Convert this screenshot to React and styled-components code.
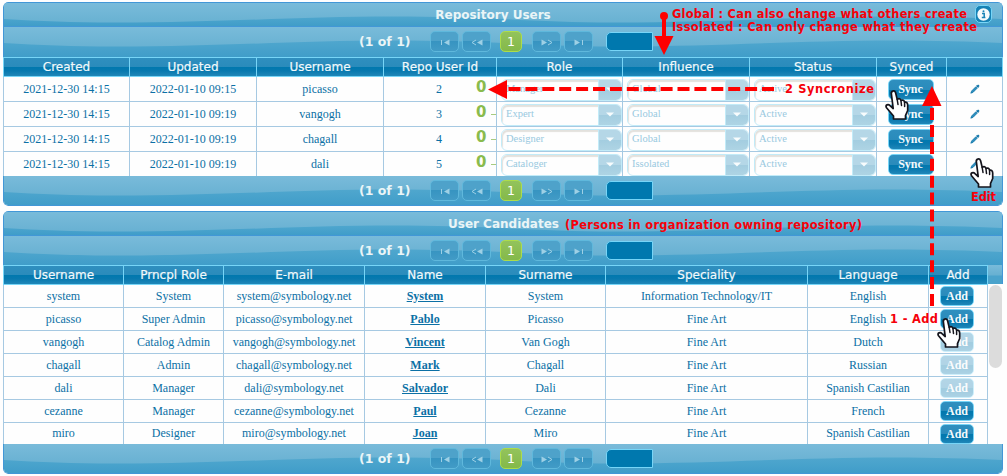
import React from 'react';
import styled, { createGlobalStyle, css } from 'styled-components';

const Global = createGlobalStyle`
  *, *::before, *::after { box-sizing: border-box; }
  body { margin: 0; background: #fefefe; }
`;

const sans = css`font-family: "DejaVu Sans", Verdana, sans-serif;`;
const glass = css`
  background: linear-gradient(#2f8fbf 0, #2a8bbb 50%, #0078ae 50%, #0879af 72%, #2087b8 100%);
`;

const Page = styled.main`
  position: relative;
  width: 1007px;
  height: 476px;
  padding: 2px 4px 0 3px;
  overflow: hidden;
  display: flex;
  flex-direction: column;
  gap: 5px;
  font-family: "Liberation Serif", "Times New Roman", serif;
  font-size: 12px;
  color: #0b70a5;
`;

const Panel = styled.section`
  width: 1000px;
  border-radius: 5px;
  overflow: hidden;
`;

const Bar = styled.div`
  display: grid;
  height: ${(p) => p.$h}px;
  border: 0 solid #4297d7;
  border-width: ${(p) => (p.$foot ? '0 1px 1px' : '1px 1px 0')};
  border-radius: ${(p) => (p.$foot ? '0 0 5px 5px' : p.$title ? '5px 5px 0 0' : '0')};
  overflow: hidden;
  > * { grid-area: 1 / 1; }
`;

const WaveSvg = styled.svg`
  width: 998px;
  height: 100%;
  display: block;
`;

const Title = styled.h2`
  ${sans}
  margin: 0 0 0 ${(p) => p.$shift}px;
  padding-top: 5px;
  font-size: 12px;
  line-height: 15px;
  color: #eaf5f7;
  text-align: center;
  z-index: 1;
`;

const Pager = styled.div`
  ${sans}
  z-index: 1;
  display: flex;
  align-items: flex-start;
  padding: 4px 0 0 355px;
  color: #eaf5f7;
`;

const PageInfo = styled.span`
  width: 71px;
  font-weight: bold;
  font-size: 12.5px;
  line-height: 21px;
  white-space: nowrap;
`;

const PageBtn = styled.span`
  display: flex;
  align-items: center;
  justify-content: center;
  width: 29px;
  height: 21px;
  margin-right: 3px;
  border: 1px solid #5fb8dc;
  border-radius: 5px;
  background: linear-gradient(#4ea2ca 0 50%, #3794c1 50%, #429bc6);
`;

const PageNumber = styled(PageBtn)`
  width: 22px;
  margin: 0 10px 0 6px;
  border-color: #acdd4a;
  background: linear-gradient(#93c35c, #84b94a);
  font-size: 12.5px;
  color: #fff;
`;

const PageSelect = styled.span`
  width: 47px;
  height: 19px;
  margin: 1px 0 0 10px;
  border: 1px solid #77d5f7;
  border-radius: 5px 0 0 5px;
  background: #0078ae;
`;

const Row = styled.div`
  display: grid;
  grid-template-columns: ${(p) => p.$cols};
  height: ${(p) => p.$h}px;
  width: fit-content;
`;

const HeadCell = styled.div`
  ${sans}
  ${glass}
  border: 1px solid #77d5f7;
  border-width: 1px 0 2px 1px;
  font-size: 12px;
  line-height: 18px;
  color: #f2f9fb;
  -webkit-text-stroke: 0.2px #f2f9fb;
  text-align: center;
  white-space: nowrap;
  &:last-child { border-right-width: 1px; }
`;

const Cell = styled.div`
  display: flex;
  align-items: center;
  justify-content: center;
  min-width: 0;
  border: 0 solid #a6c9e2;
  border-left-width: 1px;
  border-bottom-width: ${(p) => (p.$last ? 0 : 1)}px;
  background: #fefefe;
  white-space: nowrap;
  &:last-child { border-right-width: 1px; }
`;

const ActionCell = styled(Cell)`
  padding-right: ${(p) => p.$pad}px;
`;

const EditCell = styled(Cell)`
  padding-left: 1px;
`;

const IdCell = styled(Cell)`
  justify-content: flex-start;
  padding-left: 52px;
`;

const Zero = styled.b`
  ${sans}
  width: 11px;
  margin: -4px 0 0 34px;
  font-size: 15px;
  line-height: 18px;
  color: #8abb4d;
`;

const Dash = styled.i`
  width: 5px;
  height: 1px;
  margin: 0 0 0 4px;
  background: #a7cb81;
`;

const SelectCell = styled(Cell)`
  justify-content: flex-start;
  padding: 1px 0 0 4px;
`;

const SelectBox = styled.div`
  display: flex;
  width: 122px;
  height: 22px;
  border: 1px solid #c2ebf8;
  border-radius: 6px;
  overflow: hidden;
  color: #99c9df;
`;

const SelectText = styled.span`
  flex: 1;
  padding-left: 4px;
  font-size: 10.5px;
  line-height: 18px;
  box-shadow: inset 1px 2px 1px #e3e1dd;
  border-radius: 5px 0 0 0;
`;

const SelectArrow = styled.span`
  display: flex;
  align-items: center;
  justify-content: center;
  width: 23px;
  border-left: 1px solid #c2ebf8;
  background: linear-gradient(#b5d7e7 0 50%, #a3cde0 50%, #aed4e4);
`;

const Button = styled.button`
  ${glass}
  width: ${(p) => p.$w}px;
  height: ${(p) => p.$h}px;
  padding: 0;
  border: 1px solid #77d5f7;
  border-radius: 5px;
  font: bold 12px/1 "Liberation Serif", serif;
  color: #f4fafc;
  opacity: ${(p) => (p.$off ? 0.36 : 1)};
`;

const NameLink = styled.a`
  font-weight: bold;
  text-decoration: underline;
  font-size: 12px;
`;

const TableArea = styled.div`
  display: flex;
  background: #fefefe;
`;

const ScrollColumn = styled.div`
  width: 15px;
  height: 179px;
`;

const ScrollHead = styled.div`
  height: 19px;
  border-right: 1px solid #4297d7;
  background: linear-gradient(#79bbda, #68b1d2 50%, #4aa3cc 60%);
`;

const ScrollThumb = styled.div`
  width: 13px;
  height: 83px;
  margin: 1px 0 0 1px;
  border-radius: 7px;
  background: #dcdcdc;
`;

const Info = styled.span`
  position: absolute;
  left: 975px;
  top: 5px;
  width: 17px;
  height: 18px;
  display: grid;
  place-items: center;
  border: 1px solid #77d5f7;
  border-radius: 5px;
  background: #1682b5;
`;

const Overlay = styled.svg`
  position: absolute;
  inset: 0;
  text { font: bold 11.4px "DejaVu Sans", Verdana, sans-serif; fill: #f5000a; }
`;

let waveSeq = 0;
function Wave({ h }) {
  const [id] = React.useState(() => `wave${waveSeq++}`);
  const one = (x) => `C${x + 35} 18 ${x + 70} 19.500 ${x + 110} 19.500 C${x + 220} 19.500 ${x + 290} 13.500 ${x + 390} 13.500 C${x + 430} 13.500 ${x + 470} 14.500 ${x + 500} 16`;
  return (
    <WaveSvg viewBox={`0 0 998 ${h}`} preserveAspectRatio="none">
      <defs>
        <linearGradient id={id} x1="0" y1="0" x2="0" y2="20" gradientUnits="userSpaceOnUse">
          <stop stopColor="#79bbda" />
          <stop offset="1" stopColor="#68b1d2" />
        </linearGradient>
        <linearGradient id={`${id}b`} x1="0" y1="13" x2="0" y2={h} gradientUnits="userSpaceOnUse">
          <stop stopColor="#50a7ce" />
          <stop offset="1" stopColor="#409dc9" />
        </linearGradient>
      </defs>
      <rect width="998" height={h} fill={`url(#${id}b)`} />
      <path d={`M0 0V16${one(0)}${one(500)}V0Z`} fill={`url(#${id})`} />
    </WaveSvg>
  );
}

function NavIcon({ type }) {
  const flip = type === 'next' || type === 'last';
  const edge = type === 'first' || type === 'last';
  return (
    <svg width="12" height="8" viewBox="0 0 12 8">
      <g transform={flip ? 'translate(12 0) scale(-1 1)' : undefined} stroke="#9ed0e5" fill="none">
        {edge ? <path d="M2.5 2V7" /> : <path d="M5 2L1 4.5L5 7" />}
        <path d={edge ? 'M10.500 1.500V7.500L5 4.500Z' : 'M11.500 1.500V7.500L6 4.500Z'} fill="#9ed0e5" stroke="none" />
      </g>
    </svg>
  );
}

function PagerBar({ h, foot }) {
  return (
    <Bar $h={h} $foot={foot}>
      <Wave h={h - 1} />
      <Pager>
        <PageInfo>(1 of 1)</PageInfo>
        <PageBtn><NavIcon type="first" /></PageBtn>
        <PageBtn><NavIcon type="prev" /></PageBtn>
        <PageNumber>1</PageNumber>
        <PageBtn><NavIcon type="next" /></PageBtn>
        <PageBtn><NavIcon type="last" /></PageBtn>
        <PageSelect />
      </Pager>
    </Bar>
  );
}

function Select({ value }) {
  return (
    <SelectBox>
      <SelectText>{value}</SelectText>
      <SelectArrow>
        <svg width="8" height="5"><path d="M0 .5H8L4 4.5Z" fill="#f7fcfd" /></svg>
      </SelectArrow>
    </SelectBox>
  );
}

function Pencil() {
  return (
    <svg width="10" height="10" viewBox="0 0 10 10">
      <path d="M.8 9.200L1.600 7L5.800 2.800L7.200 4.200L3 8.400Z" fill="#2e8fbf" stroke="#0870a5" strokeWidth=".7" />
      <path d="M6.500 1.500L8.500 3.500M7.700 .8L9.200 2.300" stroke="#0870a5" strokeWidth="1.200" />
    </svg>
  );
}

function Hand({ x, y }) {
  return (
    <g transform={`translate(${x} ${y})`} stroke="#14141c" strokeLinejoin="round" strokeLinecap="round">
      <path
        d="M6.4 4.2C5.6 .8 9.6 -.2 10.6 2.8L12.2 9.4C14 8 15.4 8.6 16 10.5C17.8 9.6 19.2 10.4 19.6 12.2C21.4 11.6 22.6 13 22.7 15V20.5L20.5 25.5V29H8.5V26L5.5 22.5L1.3 17.5C.2 14.8 3.2 13.8 5 15.6L8.2 18.5Z"
        fill="#fff" strokeWidth="1.700"
      />
      <path d="M12.2 9.5L13 14.5M16 11L16.5 15.5M19.6 12.5V16.5" fill="none" strokeWidth="1.500" />
    </g>
  );
}

const userCols = '126px 127px 127px 113px 126px 127px 127px 70px 57px';
const userHeads = ['Created', 'Updated', 'Username', 'Repo User Id', 'Role', 'Influence', 'Status', 'Synced', ''];
const users = [
  ['2022-01-10 09:15', 'picasso', 2, 'Manager', 'Global'],
  ['2022-01-10 09:19', 'vangogh', 3, 'Expert', 'Global'],
  ['2022-01-10 09:19', 'chagall', 4, 'Designer', 'Global'],
  ['2022-01-10 09:19', 'dali', 5, 'Cataloger', 'Issolated'],
];

const candCols = '120px 100px 141px 121px 120px 202px 121px 60px';
const candHeads = ['Username', 'Prncpl Role', 'E-mail', 'Name', 'Surname', 'Speciality', 'Language', 'Add'];
const candidates = [
  ['system', 'System', 'System', 'System', 'Information Technology/IT', 'English', true],
  ['picasso', 'Super Admin', 'Pablo', 'Picasso', 'Fine Art', 'English', true],
  ['vangogh', 'Catalog Admin', 'Vincent', 'Van Gogh', 'Fine Art', 'Dutch', false],
  ['chagall', 'Admin', 'Mark', 'Chagall', 'Fine Art', 'Russian', false],
  ['dali', 'Manager', 'Salvador', 'Dali', 'Fine Art', 'Spanish Castilian', false],
  ['cezanne', 'Manager', 'Paul', 'Cezanne', 'Fine Art', 'French', true],
  ['miro', 'Designer', 'Joan', 'Miro', 'Fine Art', 'Spanish Castilian', true],
];

function UsersPanel() {
  return (
    <Panel>
      <Bar $h={24} $title><Wave h={23} /><Title $shift={-20}>Repository Users</Title></Bar>
      <PagerBar h={31} />
      <Row $cols={userCols} $h={20}>
        {userHeads.map((t, i) => <HeadCell key={i}>{t}</HeadCell>)}
      </Row>
      {users.map(([updated, name, id, role, influence], i) => {
        const last = i === users.length - 1;
        return (
          <Row key={id} $cols={userCols} $h={last ? 24 : 25}>
            <Cell $last={last}>2021-12-30 14:15</Cell>
            <Cell $last={last}>{updated}</Cell>
            <Cell $last={last}>{name}</Cell>
            <IdCell $last={last}>{id}<Zero>0</Zero><Dash /></IdCell>
            <SelectCell $last={last}><Select value={role} /></SelectCell>
            <SelectCell $last={last}><Select value={influence} /></SelectCell>
            <SelectCell $last={last}><Select value="Active" /></SelectCell>
            <ActionCell $last={last} $pad={2}><Button $w={46} $h={21}>Sync</Button></ActionCell>
            <EditCell $last={last}><Pencil /></EditCell>
          </Row>
        );
      })}
      <PagerBar h={30} foot />
    </Panel>
  );
}

function CandidatesPanel() {
  return (
    <Panel>
      <Bar $h={24} $title><Wave h={23} /><Title $shift={1}>User Candidates</Title></Bar>
      <PagerBar h={30} />
      <TableArea>
        <div>
          <Row $cols={candCols} $h={20}>
            {candHeads.map((t) => <HeadCell key={t}>{t}</HeadCell>)}
          </Row>
          {candidates.map(([user, role, name, surname, spec, lang, on], i) => {
            const last = i === candidates.length - 1;
            return (
              <Row key={user} $cols={candCols} $h={last ? 21 : 23}>
                <Cell $last={last}>{user}</Cell>
                <Cell $last={last}>{role}</Cell>
                <Cell $last={last}>{user}@symbology.net</Cell>
                <Cell $last={last}><NameLink>{name}</NameLink></Cell>
                <Cell $last={last}>{surname}</Cell>
                <Cell $last={last}>{spec}</Cell>
                <Cell $last={last}>{lang}</Cell>
                <ActionCell $last={last} $pad={2}><Button $w={34} $h={20} $off={!on}>Add</Button></ActionCell>
              </Row>
            );
          })}
        </div>
        <ScrollColumn><ScrollHead /><ScrollThumb /></ScrollColumn>
      </TableArea>
      <PagerBar h={30} foot />
    </Panel>
  );
}

export default function App() {
  return (
    <>
      <Global />
      <Page>
        <UsersPanel />
        <CandidatesPanel />
        <Info>
          <svg width="13" height="13" viewBox="0 0 13 13">
            <circle cx="6.5" cy="6.5" r="6.2" fill="#f4fafc" />
            <path d="M5 5.5H7.2V9.4M4.8 9.6H8.4" stroke="#1682b5" strokeWidth="1.500" fill="none" />
            <circle cx="6.5" cy="3.2" r="1" fill="#1682b5" />
          </svg>
        </Info>
        <Overlay width="1007" height="476" viewBox="0 0 1007 476">
          <g stroke="#fe0000" strokeWidth="4">
            <path d="M664 16V40" />
            <path d="M774 89H500" strokeDasharray="12 4.900" />
            <path d="M932 306V104" strokeDasharray="12 4.900" />
          </g>
          <g fill="#fe0000">
            <circle cx="664" cy="16" r="4" />
            <path d="M654.500 36H673.500L664 55Z" />
            <path d="M488 89.500L507 80V99Z" />
            <path d="M922 106H941.500L932 86Z" />
          </g>
          <text x="672" y="18" textLength="295">Global : Can also change what others create</text>
          <text x="672" y="31" textLength="305">Issolated : Can only change what they create</text>
          <text x="785" y="93" textLength="89">2 Syncronize</text>
          <text x="971" y="201" textLength="25">Edit</text>
          <text x="565" y="229" textLength="297">(Persons in organization owning repository)</text>
          <text x="890" y="323" textLength="48">1 - Add</text>
          <Hand x={885} y={90} />
          <Hand x={970} y={158} />
          <Hand x={937} y={318} />
        </Overlay>
      </Page>
    </>
  );
}
